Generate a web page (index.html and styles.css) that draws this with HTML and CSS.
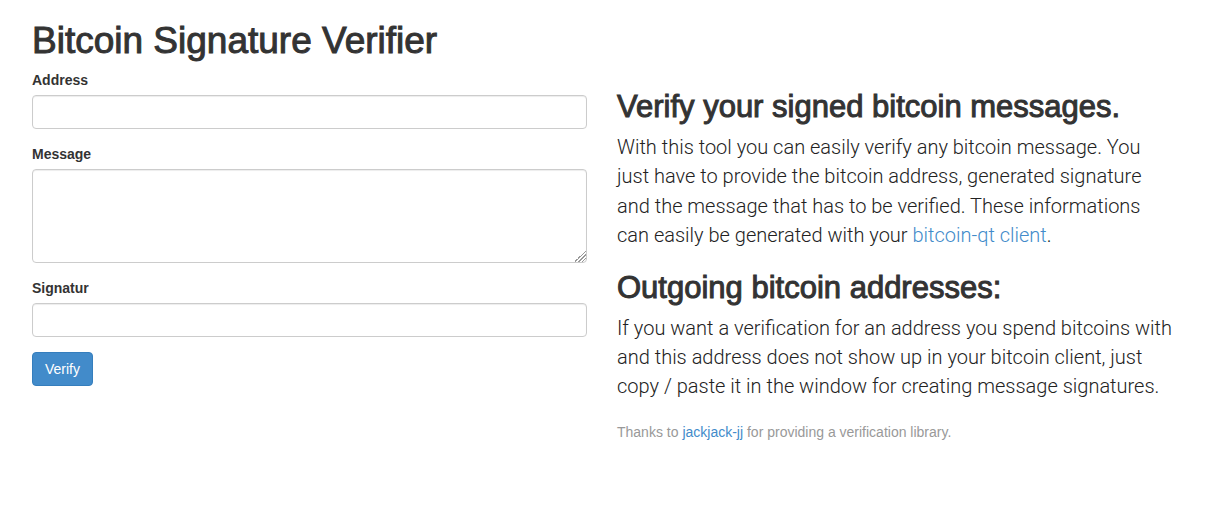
FILE: index.html
```html
<!DOCTYPE html>
<html lang="en">
<head>
<meta charset="utf-8">
<title>Bitcoin Signature Verifier</title>
<link rel="stylesheet" href="styles.css">
</head>
<body>
<main class="container">
  <h1 class="title">Bitcoin Signature Verifier</h1>
  <div class="row">
    <form class="form">
      <div class="group">
        <label class="label" for="address">Address</label>
        <input class="control" id="address" type="text">
      </div>
      <div class="group">
        <label class="label" for="message">Message</label>
        <textarea class="control control-area" id="message"></textarea>
      </div>
      <div class="group">
        <label class="label" for="signature">Signatur</label>
        <input class="control" id="signature" type="text">
      </div>
      <button class="button" type="button">Verify</button>
    </form>
    <section class="info">
      <h2 class="heading">Verify your signed bitcoin messages.</h2>
      <p class="lead">With this tool you can easily verify any bitcoin message. You<br>just have to provide the bitcoin address, generated signature and the message that has to be verified. These informations<br>can easily be generated with your <a class="link" href="#">bitcoin-qt client</a>.</p>
      <h2 class="heading">Outgoing bitcoin addresses:</h2>
      <p class="lead">If you want a verification for an address you spend bitcoins with and this address does not show up in your bitcoin client, just copy / paste it in the window for creating message signatures.</p>
      <p class="thanks">Thanks to <a class="link" href="#">jackjack-jj</a> for providing a verification library.</p>
    </section>
  </div>
</main>
</body>
</html>
```
FILE: styles.css
```css
* { box-sizing: border-box; }
body {
  margin: 0;
  background: #fff;
  color: #333;
  font: 14px/20px "Liberation Sans", Arial, sans-serif;
}
.container {
  padding: 20px 35px 20px 32px;
}
.title {
  margin: 0 0 8px;
  font: 400 37px/42px "Liberation Sans", Arial, sans-serif;
  -webkit-text-stroke: 1px #333;
}
.row {
  display: grid;
  grid-template-columns: minmax(0, 1fr) minmax(0, 1fr);
  gap: 30px;
}
.group { margin-bottom: 15px; }
.label {
  display: block;
  margin-bottom: 5px;
  font-weight: 700;
}
.control {
  display: block;
  width: 100%;
  height: 34px;
  padding: 6px 12px;
  border: 1px solid #ccc;
  border-radius: 4px;
  background: #fff;
  box-shadow: inset 0 1px 1px rgba(0, 0, 0, .075);
  color: #555;
  font: inherit;
}
.control-area {
  height: 94px;
  resize: vertical;
}
.control-area::-webkit-resizer {
  background: linear-gradient(135deg, transparent 60%, #999 60%, #999 66%, transparent 66%, transparent 72%, #999 72%, #999 78%, transparent 78%, transparent 84%, #999 84%, #999 90%, transparent 90%);
}
.button {
  height: 34px;
  padding: 0 12px;
  border: 1px solid #357ebd;
  border-radius: 4px;
  background: #428bca;
  color: #fff;
  font: 14px/20px "Liberation Sans", Arial, sans-serif;
}
.info { padding-top: 20px; }
.heading {
  margin: 0 0 10px;
  font: 400 31px/33px "Liberation Sans", Arial, sans-serif;
  -webkit-text-stroke: 1px #333;
}
.lead {
  margin: 0 0 20px;
  color: #222;
  font: 300 20px/1.47 Roboto, sans-serif;
}
.thanks {
  margin: 0;
  color: #999;
}
.link {
  color: #428bca;
  text-decoration: none;
}
```
